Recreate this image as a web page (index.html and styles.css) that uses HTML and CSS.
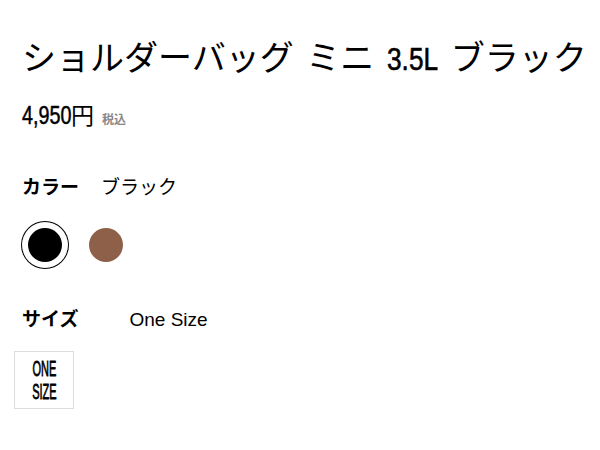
FILE: index.html
```html
<!DOCTYPE html>
<html lang="ja">
<head>
<meta charset="utf-8">
<title>ショルダーバッグ ミニ 3.5L ブラック</title>
<link rel="stylesheet" href="styles.css">
</head>
<body>
<main class="product">
  <h1 class="title">ショルダーバッグ ミニ <span class="num title-num">3.5L</span> ブラック</h1>
  <div class="price"><span class="num price-num">4,950</span><span class="yen">円</span><span class="tax">税込</span></div>

  <div class="option-row color-row">
    <span class="option-label">カラー</span>
    <span class="option-value">ブラック</span>
  </div>
  <div class="swatches">
    <span class="swatch swatch-black is-selected"></span>
    <span class="swatch swatch-brown"></span>
  </div>

  <div class="option-row size-row">
    <span class="option-label size-label">サイズ</span>
    <span class="option-value latin">One Size</span>
  </div>
  <div class="sizes">
    <span class="size-box"><span class="num size-num">ONE<br>SIZE</span></span>
  </div>
</main>
</body>
</html>
```
FILE: styles.css
```css
html, body {
  margin: 0;
  padding: 0;
  background: #fff;
}
body {
  font-family: "Noto Sans CJK JP", "Liberation Sans", sans-serif;
  color: #000;
}
.product {
  padding: 32px 22px 0 22px;
}
.num {
  display: inline-block;
  font-family: "Liberation Sans", sans-serif;
  font-weight: 700;
  transform-origin: left center;
}
.title {
  margin: 0;
  font-size: 34px;
  font-weight: 400;
  line-height: 48px;
  word-spacing: 5px;
  white-space: nowrap;
}
.title-num {
  font-size: 32px;
  font-weight: 400;
  -webkit-text-stroke: 0.6px #000;
  transform: scaleX(0.82);
  margin-right: -11px;
}
.price {
  margin-top: 16px;
  display: flex;
  align-items: baseline;
  line-height: 30px;
}
.price-num {
  font-size: 26px;
  font-weight: 400;
  -webkit-text-stroke: 0.5px #000;
  transform: scaleX(0.76);
  margin-right: -16px;
}
.price .yen {
  font-size: 23px;
}
.price .tax {
  font-size: 12px;
  font-weight: 700;
  color: #888;
  margin-left: 8px;
}
.option-row {
  display: flex;
  align-items: baseline;
  line-height: 28px;
}
.color-row {
  margin-top: 38px;
}
.option-label {
  font-size: 19px;
  font-weight: 700;
  margin-right: 22px;
}
.size-label {
  margin-right: 51px;
}
.option-value {
  font-size: 19px;
}
.latin {
  font-family: "Liberation Sans", sans-serif;
}
.swatches {
  display: flex;
  gap: 27px;
  margin-top: 28px;
  padding-left: 6px;
}
.swatch {
  width: 34px;
  height: 34px;
  border-radius: 50%;
  display: block;
}
.swatch-black {
  background: #000;
}
.swatch-brown {
  background: #8e604a;
}
.is-selected {
  box-shadow: 0 0 0 6px #fff, 0 0 0 7px #000;
}
.size-row {
  margin-top: 42px;
}
.sizes {
  margin-top: 17px;
  margin-left: -8px;
}
.size-box {
  display: flex;
  width: 58px;
  height: 56px;
  border: 1px solid #ddd;
  align-items: center;
  justify-content: center;
  text-align: center;
}
.size-num {
  font-size: 22px;
  font-weight: 400;
  -webkit-text-stroke: 0.8px #000;
  line-height: 23px;
  transform: scaleX(0.5);
  transform-origin: center;
}
```
